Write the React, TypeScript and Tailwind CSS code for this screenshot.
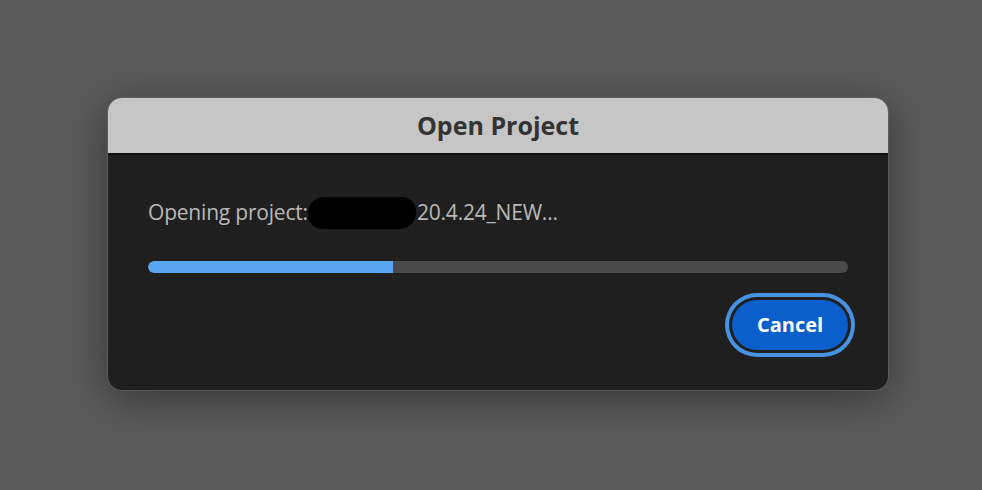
import React from "react";

const COPY = {
  title: "Open Project",
  label: "Opening project:",
  fileTail: "20.4.24_NEW...",
  cancel: "Cancel",
};

const progress = 35;

const App = () => {
  return (
    <div
      className="h-[490px] w-full bg-[#5a5a5a] pt-[98px] pl-[108px]"
      style={{ fontFamily: '"Open Sans", "Noto Sans", sans-serif' }}
    >
      <div className="w-[780px] rounded-[14px] overflow-hidden bg-[#1f1f1f] ring-1 ring-white/10 shadow-[0_8px_40px_rgba(0,0,0,0.4)]">
        <div className="h-[57px] bg-[#c6c6c6] border-b-2 border-[#111] flex items-center justify-center">
          <p className="text-[25px] font-bold text-[#333]">{COPY.title}</p>
        </div>
        <div className="flex flex-col px-[40px] pt-[43px] pb-[40px]">
          <div className="flex items-center h-[30px] text-[21px] text-[#b9b9b9] tracking-[-0.2px]">
            <span>{COPY.label}</span>
            <span className="inline-block w-[108px] h-[32px] bg-black rounded-[15px] -skew-x-3" />
            <span className="ml-[1px]">{COPY.fileTail}</span>
          </div>
          <div className="mt-[33px] h-[12px] w-full rounded-full bg-[#4a4a4a] overflow-hidden">
            <div
              className="h-full bg-[#5aa5f2] rounded-l-full"
              style={{ width: `${progress}%` }}
            />
          </div>
          <div className="flex justify-end mt-[27px]">
            <button className="w-[116px] h-[50px] rounded-full bg-[#0b5fcc] text-white text-[20px] font-bold ring-[4px] ring-[#4892e4] ring-offset-[3px] ring-offset-[#1f1f1f]">
              {COPY.cancel}
            </button>
          </div>
        </div>
      </div>
    </div>
  );
};

export default App;
